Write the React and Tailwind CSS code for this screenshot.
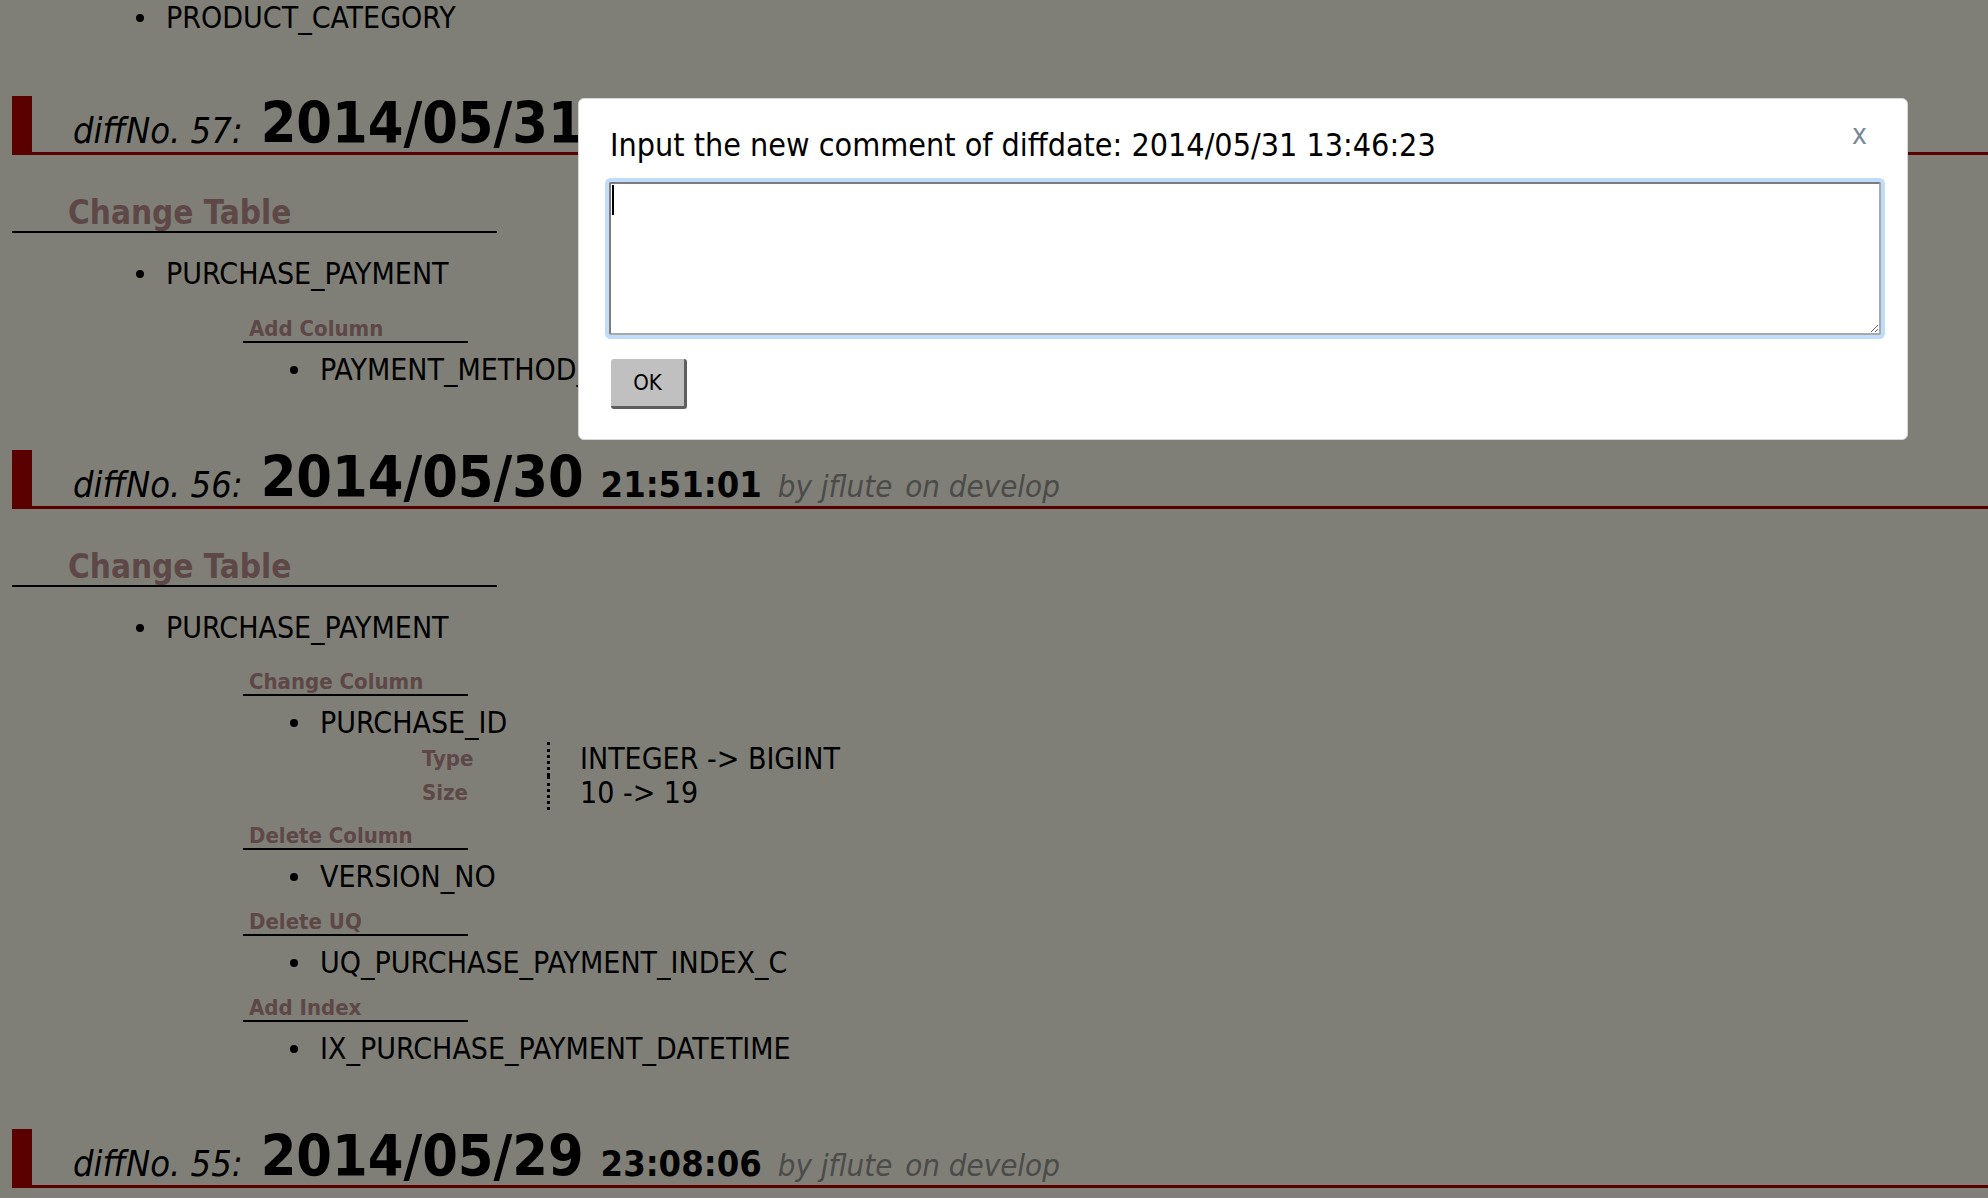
const FONT = "font-['DejaVu_Sans_Condensed','DejaVu_Sans',sans-serif]";

const DiffHeader = ({ no, date, time, className = "" }) => (
  <div
    className={`ml-[12px] h-[59px] border-l-[20px] border-b-[3px] border-[#b60000] pl-[41px] flex items-end ${className}`}
  >
    <div className="flex items-baseline leading-none whitespace-nowrap">
      <span className="italic text-[36px] text-black">diffNo. {no}:</span>
      <span className="ml-[18px] text-[57px] font-bold text-black">{date}</span>
      <span className="ml-[17px] text-[36px] font-bold text-black">{time}</span>
      <span className="ml-[16px] italic text-[31px] text-[#969692]">
        by jflute <span className="ml-[4px]">on develop</span>
      </span>
    </div>
  </div>
);

const TableTitle = ({ children }) => (
  <div className="mt-[40px] ml-[12px] w-[485px] pl-[56px] h-[38px] leading-[36px] border-b-2 border-black text-[33px] font-bold text-[#bc8f8f]">
    {children}
  </div>
);

const SubTitle = ({ children, className = "" }) => (
  <div
    className={`ml-[243px] w-[225px] pl-[6px] h-[26px] leading-[24px] border-b-2 border-black text-[22px] font-bold text-[#bc8f8f] ${className}`}
  >
    {children}
  </div>
);

const Item = ({ children, level = 1, className = "" }) => (
  <div
    className={`flex items-center h-[34px] pb-[5px] ${
      level === 1 ? "ml-[136px]" : "ml-[290px]"
    } ${className}`}
  >
    <span className="w-[8px] h-[8px] rounded-full bg-black mr-[22px] shrink-0" />
    <span className="text-[30px] leading-[29px] text-black whitespace-nowrap">{children}</span>
  </div>
);

const Modal = () => (
  <div className="fixed left-[578px] top-[98px] w-[1330px] h-[342px] bg-white rounded-[6px] border border-[#d6d6d6] px-[31px] pt-[25px]">
    <div className="text-[32px] leading-[42px] text-black whitespace-nowrap">
      Input the new comment of diffdate: 2014/05/31 13:46:23
    </div>
    <button className="absolute right-[40px] top-[18px] text-[28px] leading-[36px] text-[#778899]">
      x
    </button>
    <div className="relative mt-[16px] -ml-[1px] w-[1272px]">
      <textarea className="block w-[1272px] h-[153px] resize-y bg-white outline-none border-2 border-t-[#7d7d7d] border-l-[#7d7d7d] border-b-[#a9a9a9] border-r-[#a9a9a9] ring-4 ring-[#bfdcfa] rounded-[2px] text-[28px] px-[2px] py-[1px]" />
      {/* text caret of the focused field */}
      <span className="absolute left-[3px] top-[3px] w-[2px] h-[30px] bg-black" />
    </div>
    <button className="mt-[24px] ml-[1px] w-[76px] h-[50px] bg-[#c0c0c0] rounded-[3px] border-r-[3px] border-b-[3px] border-[#5f5f5f] text-[22px] text-black">
      OK
    </button>
  </div>
);

export default function App() {
  return (
    <div className={`${FONT} relative min-h-[1198px] bg-[#fffef0] overflow-hidden`}>
      <div className="pt-[3px] pb-[40px]">
        <Item>PRODUCT_CATEGORY</Item>

        <DiffHeader no="57" date="2014/05/31" time="13:46:23" className="mt-[59px]" />
        <TableTitle>Change Table</TableTitle>
        <Item className="mt-[26px]">PURCHASE_PAYMENT</Item>
        <SubTitle className="mt-[24px]">Add Column</SubTitle>
        <Item level={2} className="mt-[12px]">PAYMENT_METHOD_CODE</Item>

        <DiffHeader no="56" date="2014/05/30" time="21:51:01" className="mt-[61px]" />
        <TableTitle>Change Table</TableTitle>
        <Item className="mt-[26px]">PURCHASE_PAYMENT</Item>
        <SubTitle className="mt-[23px]">Change Column</SubTitle>
        <Item level={2} className="mt-[12px]">PURCHASE_ID</Item>
        <div className="ml-[422px] grid grid-cols-[125px_auto] w-max">
          <div className="h-[34px] leading-[34px] text-[22px] font-bold text-[#bc8f8f]">Type</div>
          <div className="h-[34px] leading-[34px] border-l-[3px] border-dotted border-black pl-[30px] text-[30px] text-black">
            INTEGER -&gt; BIGINT
          </div>
          <div className="h-[34px] leading-[34px] text-[22px] font-bold text-[#bc8f8f]">Size</div>
          <div className="h-[34px] leading-[34px] border-l-[3px] border-dotted border-black pl-[30px] text-[30px] text-black">
            10 -&gt; 19
          </div>
        </div>
        <SubTitle className="mt-[14px]">Delete Column</SubTitle>
        <Item level={2} className="mt-[12px]">VERSION_NO</Item>
        <SubTitle className="mt-[14px]">Delete UQ</SubTitle>
        <Item level={2} className="mt-[12px]">UQ_PURCHASE_PAYMENT_INDEX_C</Item>
        <SubTitle className="mt-[14px]">Add Index</SubTitle>
        <Item level={2} className="mt-[12px]">IX_PURCHASE_PAYMENT_DATETIME</Item>

        <DiffHeader no="55" date="2014/05/29" time="23:08:06" className="mt-[61px]" />
      </div>

      {/* dim overlay behind the dialog */}
      <div className="fixed inset-0 bg-black/50" />
      <Modal />
    </div>
  );
}
